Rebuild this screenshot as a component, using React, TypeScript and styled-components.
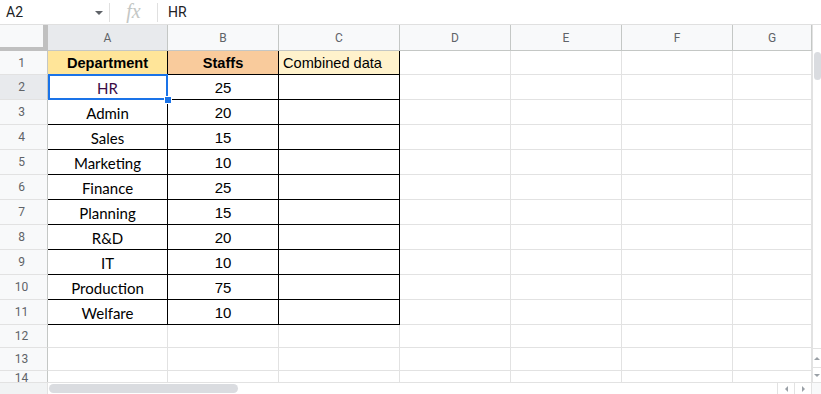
import * as React from 'react'
import styled, { createGlobalStyle } from 'styled-components'

const Global = createGlobalStyle`
  html, body { margin: 0; padding: 0; background: #fff; }
  body { font-family: Roboto, "Liberation Sans", Arial, sans-serif; }
`

const ROOT = styled.div`
  width: 821px;
  height: 394px;
  overflow: hidden;
  display: flex;
  flex-direction: column;
  background: #fff;
`

const FormulaBar = styled.div`
  height: 25px;
  flex: none;
  box-sizing: border-box;
  border-bottom: 1px solid #e0e0e0;
  display: flex;
  align-items: center;
  font-size: 14px;
  color: #202124;
`

const NameBox = styled.div`
  width: 109px;
  box-sizing: border-box;
  padding-left: 6px;
  display: flex;
  align-items: center;
  justify-content: space-between;
  padding-right: 6px;
`

const Caret = styled.span`
  width: 0;
  height: 0;
  border-left: 4px solid transparent;
  border-right: 4px solid transparent;
  border-top: 4px solid #5f6368;
  margin-top: 2px;
`

const Sep = styled.div`
  width: 1px;
  height: 19px;
  background: #e0e0e0;
`

const Fx = styled.div`
  width: 47px;
  text-align: center;
  font-family: "Liberation Serif", "DejaVu Serif", serif;
  font-style: italic;
  font-size: 20px;
  color: #c4c7c5;
  line-height: 1;
  margin-top: -3px;
`

const Value = styled.div`
  padding-left: 10px;
`

const Body = styled.div`
  flex: 1;
  display: flex;
  min-height: 0;
`

const Grid = styled.div`
  flex: 1;
  display: grid;
  grid-template-columns: 48px 120px 111px 121px 111px 111px 111px 1fr;
  grid-template-rows: 26px 24px repeat(10, 25px) 23px 23px 1fr;
  overflow: hidden;
`

const Corner = styled.div`
  background: #f8f9fa;
  box-sizing: border-box;
  border-right: 5px solid #c0c0c0;
  border-bottom: 4px solid #c0c0c0;
`

const ColHead = styled.div<{ $sel?: boolean }>`
  background: ${p => (p.$sel ? '#e8eaed' : '#f8f9fa')};
  box-sizing: border-box;
  border-right: 1px solid #c4c7c5;
  border-bottom: 1px solid #c4c7c5;
  display: flex;
  align-items: center;
  justify-content: center;
  font-size: 12px;
  color: #5f6368;
`

const RowHead = styled.div<{ $sel?: boolean }>`
  background: ${p => (p.$sel ? '#e8eaed' : '#f8f9fa')};
  box-sizing: border-box;
  border-right: 1px solid #c4c7c5;
  border-bottom: 1px solid #e2e2e2;
  display: flex;
  align-items: center;
  justify-content: center;
  font-size: 12px;
  color: #5f6368;
  padding-right: 4px;
`

const Cell = styled.div<{
  $bg?: string
  $boxed?: boolean
  $kind?: 'head' | 'name' | 'num' | 'plain'
}>`
  position: relative;
  box-sizing: border-box;
  background: ${p => p.$bg || '#fff'};
  border-right: 1px solid ${p => (p.$boxed ? '#000' : '#e2e2e2')};
  border-bottom: 1px solid ${p => (p.$boxed ? '#000' : '#e2e2e2')};
  display: flex;
  align-items: center;
  justify-content: ${p => (p.$kind === 'plain' ? 'flex-start' : 'center')};
  padding: ${p => (p.$kind === 'plain' ? '0 4px' : '0')};
  white-space: nowrap;
  color: #000;
  font-family: ${p =>
    p.$kind === 'name' ? 'Lato, "Open Sans", sans-serif' : '"Liberation Sans", Arial, sans-serif'};
  font-size: ${p => (p.$kind === 'name' || p.$kind === 'num' ? '15px' : '14.6px')};
  font-weight: ${p => (p.$kind === 'head' ? 700 : 400)};
  padding-top: 1px;
`

const Selection = styled.div`
  position: absolute;
  z-index: 2;
  left: 0;
  top: -1px;
  right: -1px;
  bottom: -1px;
  border: 2px solid #1a73e8;
  pointer-events: none;
`

const Handle = styled.div`
  position: absolute;
  right: -6px;
  bottom: -6px;
  width: 6px;
  height: 6px;
  background: #1a73e8;
  border: 1px solid #fff;
`

const VScroll = styled.div`
  width: 9px;
  flex: none;
  box-sizing: border-box;
  border-left: 1px solid #e2e2e2;
  display: flex;
  flex-direction: column;
  background: #fff;
`

const VThumb = styled.div`
  margin: 27px 0 0 1px;
  width: 7px;
  height: 28px;
  border-radius: 4px;
  background: #dadce0;
`

const Spacer = styled.div`
  flex: 1;
`

const ArrowBox = styled.div<{ $top?: boolean }>`
  height: ${p => (p.$top ? '18px' : '14px')};
  border-top: 1px solid #e2e2e2;
  display: flex;
  align-items: center;
  justify-content: center;
`

const Tri = styled.span<{ $dir: 'up' | 'down' | 'left' | 'right' }>`
  width: 0;
  height: 0;
  ${p =>
    p.$dir === 'up'
      ? 'border-left:3px solid transparent;border-right:3px solid transparent;border-bottom:3px solid #9aa0a6;'
      : p.$dir === 'down'
      ? 'border-left:3px solid transparent;border-right:3px solid transparent;border-top:3px solid #9aa0a6;'
      : p.$dir === 'left'
      ? 'border-top:3px solid transparent;border-bottom:3px solid transparent;border-right:3px solid #9aa0a6;'
      : 'border-top:3px solid transparent;border-bottom:3px solid transparent;border-left:3px solid #9aa0a6;'}
`

const HScroll = styled.div`
  height: 12px;
  flex: none;
  box-sizing: border-box;
  border-top: 1px solid #e2e2e2;
  display: flex;
  align-items: stretch;
`

const HLeft = styled.div`
  width: 48px;
  background: #f1f3f4;
  border-right: 1px solid #e2e2e2;
  box-sizing: border-box;
`

const HTrack = styled.div`
  flex: 1;
  padding: 1px 0 1px 1px;
  display: flex;
`

const HThumb = styled.div`
  width: 189px;
  border-radius: 5px;
  background: #dadce0;
`

const NavBtn = styled.div`
  width: 16px;
  border-left: 1px solid #e2e2e2;
  display: flex;
  align-items: center;
  justify-content: center;
`

const HCorner = styled.div`
  width: 9px;
  border-left: 1px solid #e2e2e2;
  background: #f8f9fa;
`

const rows: [string, string][] = [
  ['HR', '25'],
  ['Admin', '20'],
  ['Sales', '15'],
  ['Marketing', '10'],
  ['Finance', '25'],
  ['Planning', '15'],
  ['R&D', '20'],
  ['IT', '10'],
  ['Production', '75'],
  ['Welfare', '10'],
]

const cols = ['A', 'B', 'C', 'D', 'E', 'F', 'G']

const Blanks = ({ n }: { n: number }) => (
  <>
    {Array.from({ length: n }).map((_, i) => (
      <Cell key={i} />
    ))}
  </>
)

export default function App() {
  return (
    <ROOT>
      <Global />
      <FormulaBar>
        <NameBox>
          <span>A2</span>
          <Caret />
        </NameBox>
        <Sep />
        <Fx>fx</Fx>
        <Sep />
        <Value>HR</Value>
      </FormulaBar>
      <Body>
        <Grid>
          <Corner />
          {cols.map(c => (
            <ColHead key={c} $sel={c === 'A'}>
              {c}
            </ColHead>
          ))}

          <RowHead>1</RowHead>
          <Cell $bg="#ffe599" $boxed $kind="head">Department</Cell>
          <Cell $bg="#f9cb9c" $boxed $kind="head">Staffs</Cell>
          <Cell $bg="#fff2cc" $boxed $kind="plain">Combined data</Cell>
          <Blanks n={4} />

          {rows.map(([name, num], i) => (
            <React.Fragment key={name}>
              <RowHead $sel={i === 0}>{i + 2}</RowHead>
              <Cell $boxed $kind="name" style={i === 0 ? { color: '#3b0a45' } : undefined}>
                {name}
                {i === 0 && (
                  <Selection>
                    <Handle />
                  </Selection>
                )}
              </Cell>
              <Cell $boxed $kind="num">{num}</Cell>
              <Cell $boxed />
              <Blanks n={4} />
            </React.Fragment>
          ))}

          {[12, 13, 14].map(r => (
            <React.Fragment key={r}>
              <RowHead>{r}</RowHead>
              <Blanks n={7} />
            </React.Fragment>
          ))}
        </Grid>
        <VScroll>
          <VThumb />
          <Spacer />
          <ArrowBox $top>
            <Tri $dir="up" />
          </ArrowBox>
          <ArrowBox>
            <Tri $dir="down" />
          </ArrowBox>
        </VScroll>
      </Body>
      <HScroll>
        <HLeft />
        <HTrack>
          <HThumb />
        </HTrack>
        <NavBtn>
          <Tri $dir="left" />
        </NavBtn>
        <NavBtn>
          <Tri $dir="right" />
        </NavBtn>
        <HCorner />
      </HScroll>
    </ROOT>
  )
}
